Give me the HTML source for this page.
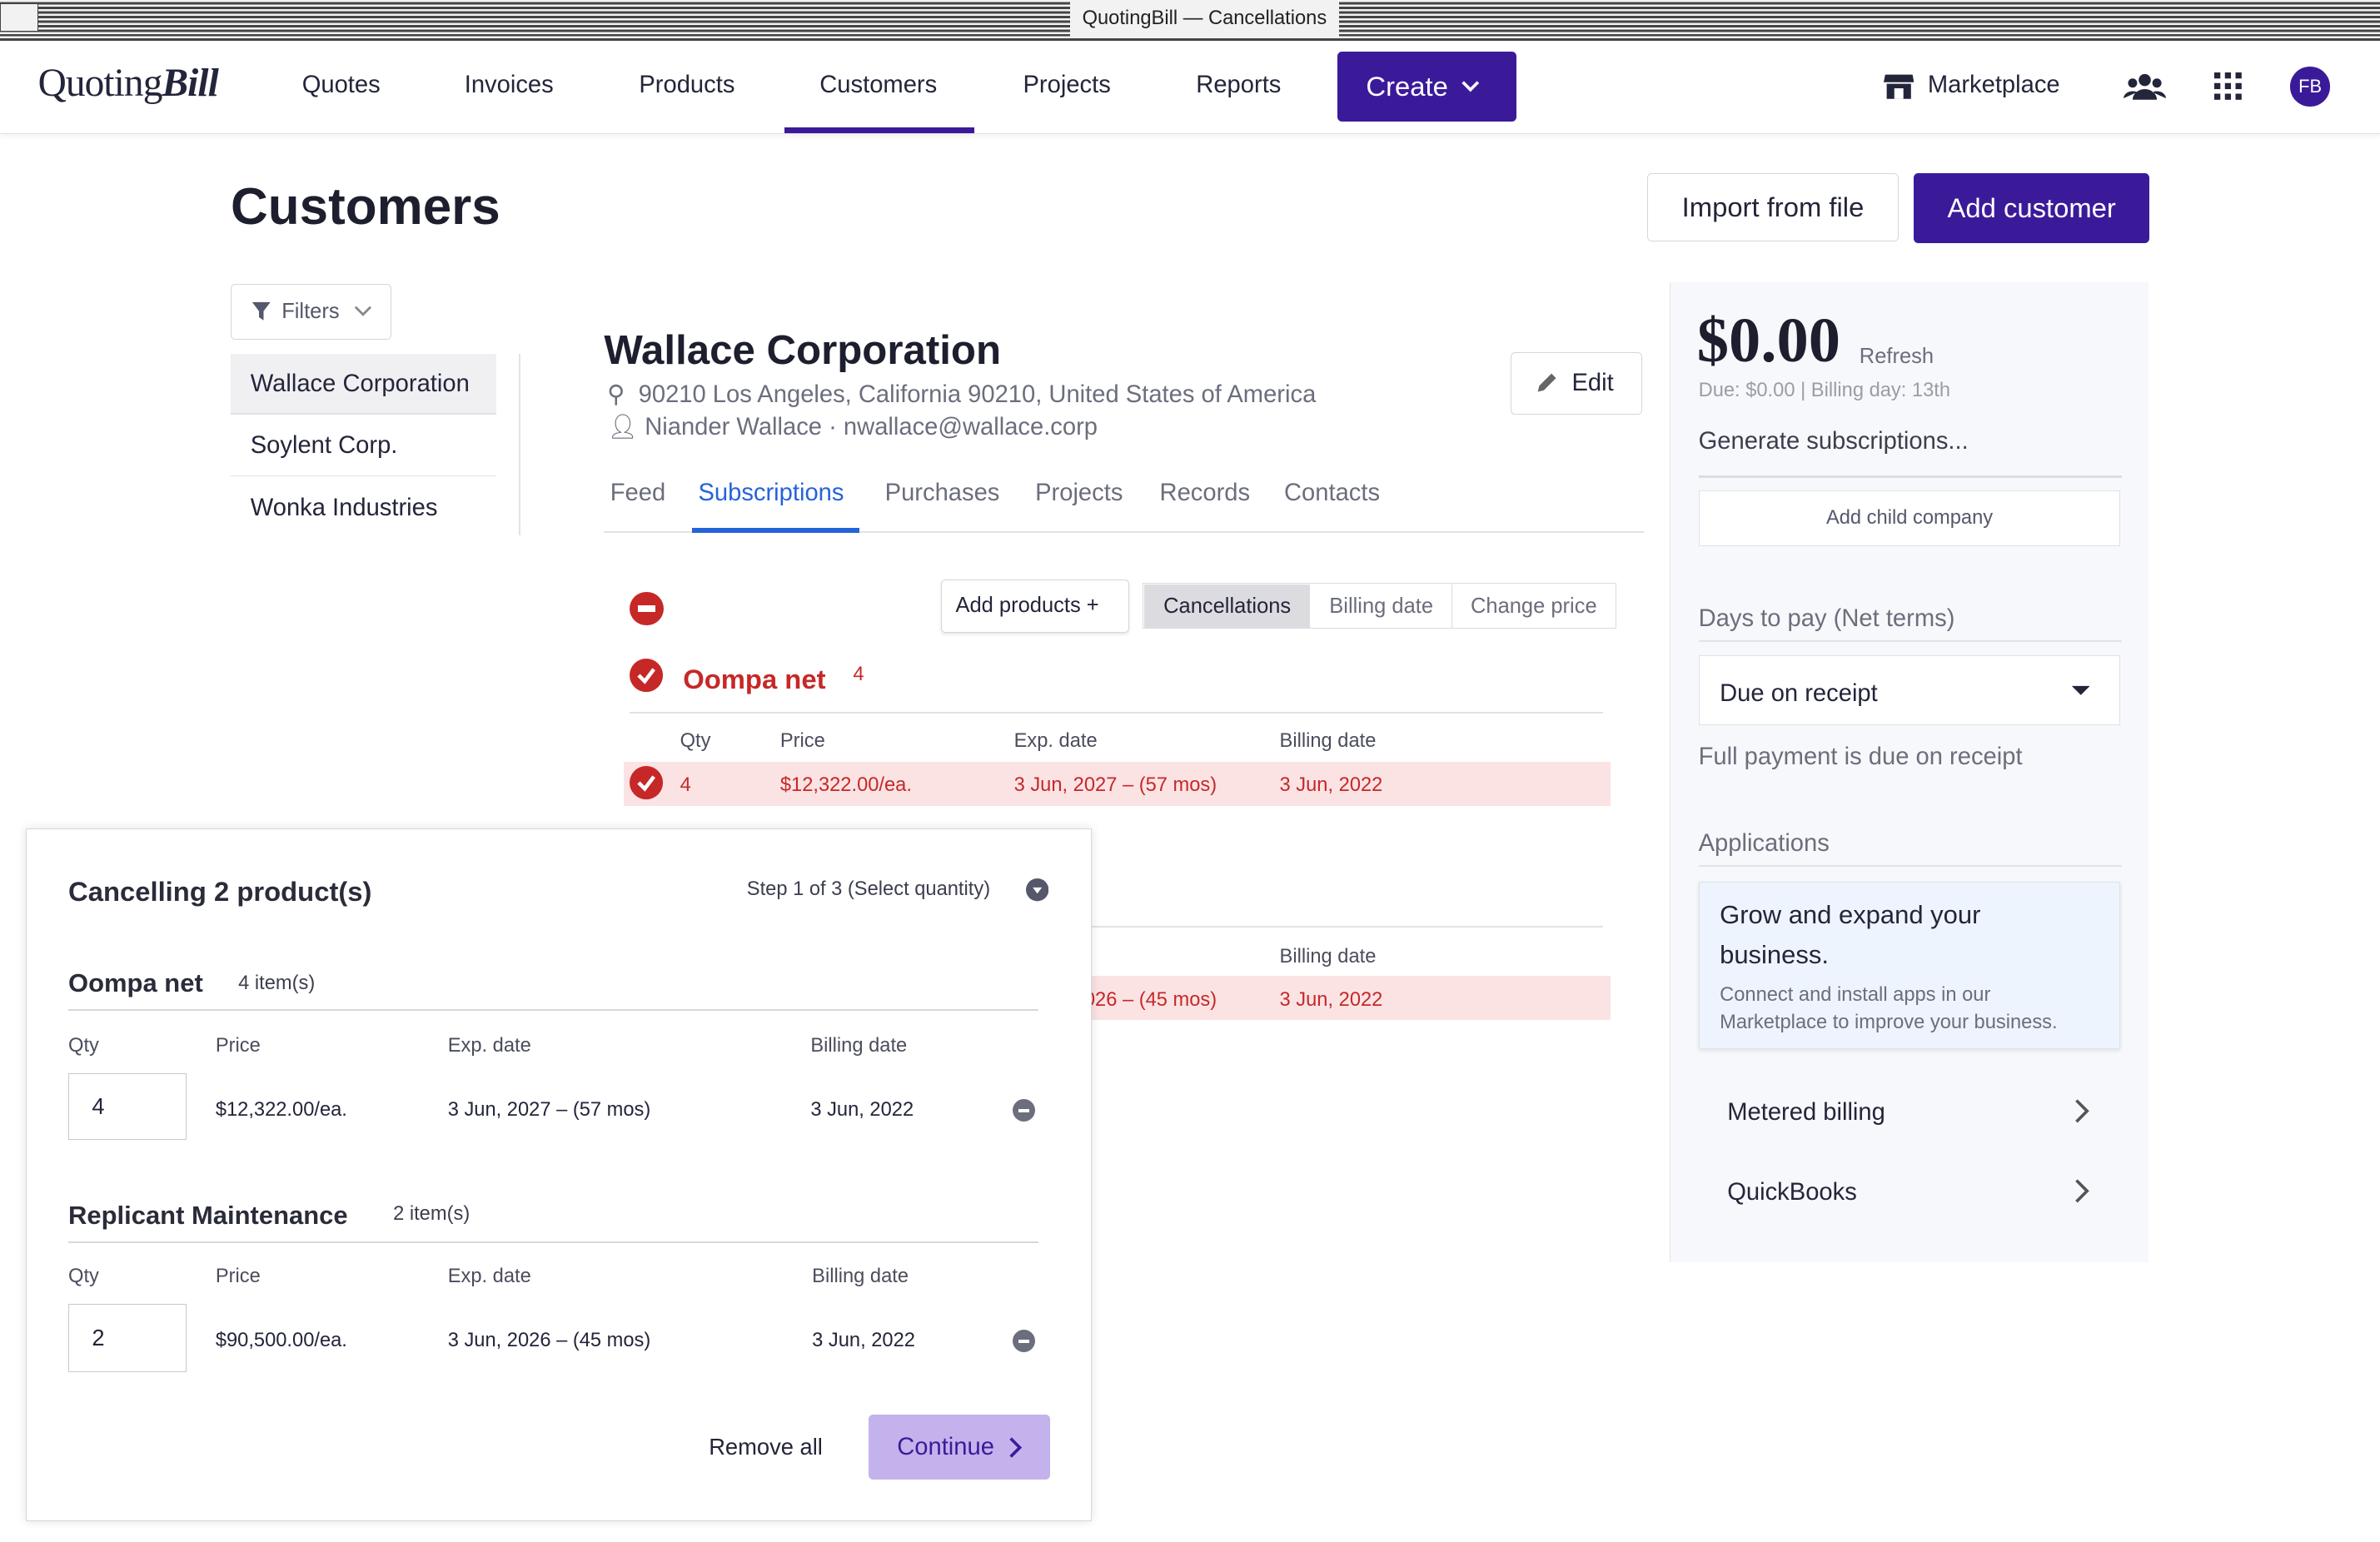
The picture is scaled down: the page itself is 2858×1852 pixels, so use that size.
<!DOCTYPE html>
<html><head><meta charset="utf-8">
<style>
html,body{margin:0;padding:0;background:#fff;overflow:hidden}
html{width:2858px;height:1852px}
#r{position:relative;width:1568px;height:1016px;zoom:1.82270;font-family:"Liberation Sans",sans-serif;color:#23253a;overflow:hidden}
.a{position:absolute;white-space:nowrap}
.tb{left:0;top:0;width:1568px;height:25px;background:repeating-linear-gradient(#f2f2f2 0 1.5px,#444 1.5px 3px);border-bottom:2px solid #444}
.nav{font-size:16px;top:47px}
.g{color:#6b6e7c}
.red{color:#c62828}
.btn{border:1px solid #d5d6dc;border-radius:3px;background:#fff}
.pill{position:absolute;border-radius:50%}
.th{font-size:13px;color:#4b4d5c}
.td{font-size:13px}
</style></head><body><div id="r">
<div class="a tb"></div>
<div class="a" style="left:0;top:2px;width:24px;height:18px;border:1px solid #444;background:#f2f2f2"></div>
<div class="a" style="left:705px;top:0;height:25px;padding:0 8px;background:#f2f2f2;font-size:13px;line-height:25px;color:#222">QuotingBill — Cancellations</div>

<div class="a" style="left:0;top:27px;width:1568px;height:61px;border-bottom:1px solid #e3e3e6;box-shadow:0 2px 3px rgba(0,0,0,.05)"></div>
<div class="a" style="left:25px;top:40px;font-family:'Liberation Serif',serif;font-size:26px;color:#23253a;letter-spacing:-.5px">Quoting<b><i>Bill</i></b></div>
<div class="a nav" style="left:199px">Quotes</div>
<div class="a nav" style="left:306px">Invoices</div>
<div class="a nav" style="left:421px">Products</div>
<div class="a nav" style="left:540px">Customers</div>
<div class="a" style="left:517px;top:84px;width:125px;height:4px;background:#3b1a9a"></div>
<div class="a nav" style="left:674px">Projects</div>
<div class="a nav" style="left:788px">Reports</div>
<div class="a" style="left:881px;top:34px;width:118px;height:46px;background:#3b1a9a;border-radius:3px;color:#fff;font-size:18px;line-height:46px;text-indent:19px">Create</div>
<svg class="a" style="left:962px;top:52px" width="14" height="10"><path d="M2 2l5 5 5-5" stroke="#fff" stroke-width="2" fill="none"/></svg>
<svg class="a" style="left:1241px;top:47px" width="20" height="19"><path d="M1 2h18l1 5H0z M2 8h16v10H2z" fill="#23253a"/><rect x="7" y="11" width="6" height="7" fill="#fff"/></svg>
<div class="a nav" style="left:1270px">Marketplace</div>
<svg class="a" style="left:1399px;top:48px" width="28" height="18"><circle cx="14" cy="5" r="4" fill="#23253a"/><circle cx="6" cy="7" r="3" fill="#23253a"/><circle cx="22" cy="7" r="3" fill="#23253a"/><path d="M6 18a8 7 0 0 1 16 0zM0 17a6 5 0 0 1 9-4M28 17a6 5 0 0 0-9-4" fill="#23253a"/></svg>
<svg class="a" style="left:1459px;top:48px" width="18" height="18"><g fill="#23253a"><rect x="0" y="0" width="4" height="4"/><rect x="7" y="0" width="4" height="4"/><rect x="14" y="0" width="4" height="4"/><rect x="0" y="7" width="4" height="4"/><rect x="7" y="7" width="4" height="4"/><rect x="14" y="7" width="4" height="4"/><rect x="0" y="14" width="4" height="4"/><rect x="7" y="14" width="4" height="4"/><rect x="14" y="14" width="4" height="4"/></g></svg>
<div class="a" style="left:1509px;top:44px;width:26px;height:26px;border-radius:50%;background:#3b1a9a;color:#fff;font-size:12px;line-height:26px;text-align:center">FB</div>

<div class="a" style="left:152px;top:117px;font-size:34px;font-weight:bold;color:#1d1f2e">Customers</div>
<div class="a btn" style="left:1085px;top:114px;width:165px;height:44px;font-size:18px;line-height:44px;text-align:center">Import from file</div>
<div class="a" style="left:1261px;top:114px;width:155px;height:46px;background:#3b1a9a;border-radius:3px;color:#fff;font-size:18px;line-height:46px;text-align:center">Add customer</div>

<div class="a btn" style="left:152px;top:187px;width:105px;height:36px;font-size:14px;line-height:36px;color:#55586a;text-indent:33px">Filters</div>
<svg class="a" style="left:165px;top:198px" width="14" height="14"><path d="M1 1h12l-4.5 6v6l-3-2V7z" fill="#55586a"/></svg>
<svg class="a" style="left:233px;top:200px" width="12" height="10"><path d="M1 2l5 5 5-5" stroke="#888" stroke-width="1.5" fill="none"/></svg>
<div class="a" style="left:342px;top:233px;width:1px;height:120px;background:#e2e2e6"></div>
<div class="a" style="left:152px;top:233px;width:175px;height:40px;background:#f0f0f3"></div>
<div class="a" style="left:165px;top:244px;font-size:16px">Wallace Corporation</div>
<div class="a" style="left:152px;top:272px;width:175px;height:1px;background:#e2e2e6"></div>
<div class="a" style="left:165px;top:285px;font-size:16px">Soylent Corp.</div>
<div class="a" style="left:152px;top:313px;width:175px;height:1px;background:#e2e2e6"></div>
<div class="a" style="left:165px;top:326px;font-size:16px">Wonka Industries</div>

<div class="a" style="left:398px;top:215px;font-size:27px;font-weight:bold;color:#1d1f2e">Wallace Corporation</div>
<div class="a g" style="left:400px;top:250px;font-size:16px">⚲&nbsp; 90210 Los Angeles, California 90210, United States of America</div>
<div class="a g" style="left:400px;top:272px;font-size:16px">👤︎ Niander Wallace · nwallace@wallace.corp</div>
<div class="a btn" style="left:995px;top:232px;width:86px;height:40px;font-size:16px;line-height:40px;text-indent:40px">Edit</div>
<svg class="a" style="left:1011px;top:244px" width="16" height="16"><path d="M2 14l1-4 8-8 3 3-8 8z" fill="#666"/></svg>
<div class="a" style="left:398px;top:350px;width:685px;height:1px;background:#e2e2e6"></div>
<div class="a g" style="left:402px;top:316px;font-size:16px">Feed</div>
<div class="a" style="left:460px;top:316px;font-size:16px;color:#2563d9">Subscriptions</div>
<div class="a" style="left:456px;top:348px;width:110px;height:3px;background:#2563d9"></div>
<div class="a g" style="left:583px;top:316px;font-size:16px">Purchases</div>
<div class="a g" style="left:682px;top:316px;font-size:16px">Projects</div>
<div class="a g" style="left:764px;top:316px;font-size:16px">Records</div>
<div class="a g" style="left:846px;top:316px;font-size:16px">Contacts</div>

<div class="pill a" style="left:415px;top:390px;width:22px;height:22px;background:#c62828"></div>
<div class="a" style="left:420px;top:399px;width:12px;height:4px;background:#fff"></div>
<div class="a btn" style="left:620px;top:382px;width:123px;height:34px;font-size:14px;line-height:34px;text-indent:9px;box-shadow:0 1px 2px rgba(0,0,0,.1)">Add products +</div>
<div class="a" style="left:753px;top:384px;width:311px;height:29px;border:1px solid #dcdce0"></div>
<div class="a" style="left:754px;top:385px;width:109px;height:29px;background:#dcdce0;font-size:14px;line-height:29px;text-align:center">Cancellations</div>
<div class="a g" style="left:864px;top:385px;width:92px;font-size:14px;line-height:29px;text-align:center;border-right:1px solid #dcdce0">Billing date</div>
<div class="a g" style="left:957px;top:385px;width:107px;font-size:14px;line-height:29px;text-align:center">Change price</div>

<svg class="a" style="left:415px;top:434px" width="22" height="22"><circle cx="11" cy="11" r="11" fill="#c62828"/><path d="M6 11l4 4 6-8" stroke="#fff" stroke-width="2.5" fill="none"/></svg>
<div class="a red" style="left:450px;top:437px;font-size:18px;font-weight:bold">Oompa net</div>
<div class="a red" style="left:562px;top:437px;font-size:13px">4</div>
<div class="a" style="left:415px;top:469px;width:641px;height:1px;background:#e2e2e6"></div>
<div class="a th" style="left:448px;top:481px">Qty</div>
<div class="a th" style="left:514px;top:481px">Price</div>
<div class="a th" style="left:668px;top:481px">Exp. date</div>
<div class="a th" style="left:843px;top:481px">Billing date</div>
<div class="a" style="left:411px;top:502px;width:650px;height:29px;background:#fbe3e4"></div>
<svg class="a" style="left:415px;top:505px" width="22" height="22"><circle cx="11" cy="11" r="11" fill="#c62828"/><path d="M6 11l4 4 6-8" stroke="#fff" stroke-width="2.5" fill="none"/></svg>
<div class="a td red" style="left:448px;top:510px">4</div>
<div class="a td red" style="left:514px;top:510px">$12,322.00/ea.</div>
<div class="a td red" style="left:668px;top:510px">3 Jun, 2027 – (57 mos)</div>
<div class="a td red" style="left:843px;top:510px">3 Jun, 2022</div>

<div class="a" style="left:415px;top:610px;width:641px;height:1px;background:#e2e2e6"></div>
<div class="a th" style="left:843px;top:623px">Billing date</div>
<div class="a" style="left:411px;top:643px;width:650px;height:29px;background:#fbe3e4"></div>
<div class="a td red" style="left:668px;top:652px">3 Jun, 2026 – (45 mos)</div>
<div class="a td red" style="left:843px;top:652px">3 Jun, 2022</div>

<div class="a" style="left:1100px;top:186px;width:315px;height:646px;background:#f7f8fb;border-left:1px solid #e4e4e8"></div>
<div class="a" style="left:1118px;top:200px;font-family:'Liberation Serif',serif;font-weight:bold;font-size:42px;color:#1d1f2e">$0.00</div>
<div class="a g" style="left:1225px;top:227px;font-size:14px">Refresh</div>
<div class="a" style="left:1119px;top:250px;font-size:13px;color:#9a9ca8">Due: $0.00 | Billing day: 13th</div>
<div class="a" style="left:1119px;top:282px;font-size:16px;color:#3c3e4e">Generate subscriptions...</div>
<div class="a" style="left:1119px;top:313px;width:279px;height:2px;background:#dcdce2"></div>
<div class="a" style="left:1119px;top:323px;width:277px;height:36px;background:#fff;border:1px solid #e0e0e5;font-size:13px;color:#55586a;line-height:36px;text-align:center">Add child company</div>
<div class="a g" style="left:1119px;top:399px;font-size:16px">Days to pay (Net terms)</div>
<div class="a" style="left:1119px;top:422px;width:279px;height:1px;background:#e2e2e6"></div>
<div class="a" style="left:1119px;top:432px;width:277px;height:45px;background:#fff;border:1px solid #e0e0e5"></div>
<div class="a" style="left:1133px;top:448px;font-size:16px">Due on receipt</div>
<svg class="a" style="left:1364px;top:451px" width="14" height="8"><path d="M1 1h12l-6 6z" fill="#23253a"/></svg>
<div class="a g" style="left:1119px;top:490px;font-size:16px">Full payment is due on receipt</div>
<div class="a g" style="left:1119px;top:547px;font-size:16px">Applications</div>
<div class="a" style="left:1119px;top:570px;width:279px;height:1px;background:#e2e2e6"></div>
<div class="a" style="left:1119px;top:581px;width:277px;height:109px;background:#eef4fd;border:1px solid #dde3ec;box-shadow:0 1px 3px rgba(0,0,0,.1)"></div>
<div class="a" style="left:1133px;top:590px;font-size:17px;line-height:26px;white-space:normal;width:215px">Grow and expand your business.</div>
<div class="a g" style="left:1133px;top:647px;font-size:13px;line-height:18px;white-space:normal;width:250px">Connect and install apps in our Marketplace to improve your business.</div>
<div class="a" style="left:1138px;top:724px;font-size:16px">Metered billing</div>
<svg class="a" style="left:1365px;top:723px" width="12" height="18"><path d="M3 2l7 7-7 7" stroke="#555" stroke-width="2" fill="none"/></svg>
<div class="a" style="left:1138px;top:777px;font-size:16px">QuickBooks</div>
<svg class="a" style="left:1365px;top:776px" width="12" height="18"><path d="M3 2l7 7-7 7" stroke="#555" stroke-width="2" fill="none"/></svg>

<div class="a" style="left:17px;top:546px;width:701px;height:455px;background:#fff;border:1px solid #d8d8dc;box-shadow:0 0 6px rgba(0,0,0,.12)"></div>
<div class="a" style="left:45px;top:577px;font-size:18px;font-weight:bold;color:#2a2c3a">Cancelling 2 product(s)</div>
<div class="a" style="left:492px;top:579px;font-size:13px;color:#3c3e4e">Step 1 of 3 (Select quantity)</div>
<svg class="a" style="left:676px;top:579px" width="15" height="15"><circle cx="7.5" cy="7.5" r="7.5" fill="#55586a"/><path d="M4.5 6h6l-3 4z" fill="#fff"/></svg>
<div class="a" style="left:45px;top:638px;font-size:17px;font-weight:bold;color:#2a2c3a">Oompa net</div>
<div class="a" style="left:157px;top:641px;font-size:13px;color:#3c3e4e">4 item(s)</div>
<div class="a" style="left:45px;top:665px;width:639px;height:1px;background:#d8d8dc"></div>
<div class="a th" style="left:45px;top:682px">Qty</div>
<div class="a th" style="left:142px;top:682px">Price</div>
<div class="a th" style="left:295px;top:682px">Exp. date</div>
<div class="a th" style="left:534px;top:682px">Billing date</div>
<div class="a" style="left:45px;top:707px;width:77px;height:43px;border:1px solid #c8c8ce;font-size:15px;line-height:43px;text-indent:15px">4</div>
<div class="a td" style="left:142px;top:724px">$12,322.00/ea.</div>
<div class="a td" style="left:295px;top:724px">3 Jun, 2027 – (57 mos)</div>
<div class="a td" style="left:534px;top:724px">3 Jun, 2022</div>
<div class="pill a" style="left:667px;top:724px;width:15px;height:15px;background:#6b6e7c"></div><div class="a" style="left:671px;top:731px;width:7px;height:2px;background:#fff"></div>
<div class="a" style="left:45px;top:791px;font-size:17px;font-weight:bold;color:#2a2c3a">Replicant Maintenance</div>
<div class="a" style="left:259px;top:793px;font-size:13px;color:#3c3e4e">2 item(s)</div>
<div class="a" style="left:45px;top:818px;width:639px;height:1px;background:#d8d8dc"></div>
<div class="a th" style="left:45px;top:834px">Qty</div>
<div class="a th" style="left:142px;top:834px">Price</div>
<div class="a th" style="left:295px;top:834px">Exp. date</div>
<div class="a th" style="left:535px;top:834px">Billing date</div>
<div class="a" style="left:45px;top:859px;width:77px;height:44px;border:1px solid #c8c8ce;font-size:15px;line-height:44px;text-indent:15px">2</div>
<div class="a td" style="left:142px;top:876px">$90,500.00/ea.</div>
<div class="a td" style="left:295px;top:876px">3 Jun, 2026 – (45 mos)</div>
<div class="a td" style="left:535px;top:876px">3 Jun, 2022</div>
<div class="pill a" style="left:667px;top:876px;width:15px;height:15px;background:#6b6e7c"></div><div class="a" style="left:671px;top:883px;width:7px;height:2px;background:#fff"></div>
<div class="a" style="left:467px;top:945px;font-size:15px">Remove all</div>
<div class="a" style="left:572px;top:932px;width:120px;height:43px;background:#c4b2ec;border-radius:3px;font-size:16px;line-height:43px;color:#3b1a9a;text-indent:19px">Continue</div>
<svg class="a" style="left:664px;top:946px" width="10" height="16"><path d="M2 2l6 6-6 6" stroke="#3b1a9a" stroke-width="2" fill="none"/></svg>
</div></body></html>
